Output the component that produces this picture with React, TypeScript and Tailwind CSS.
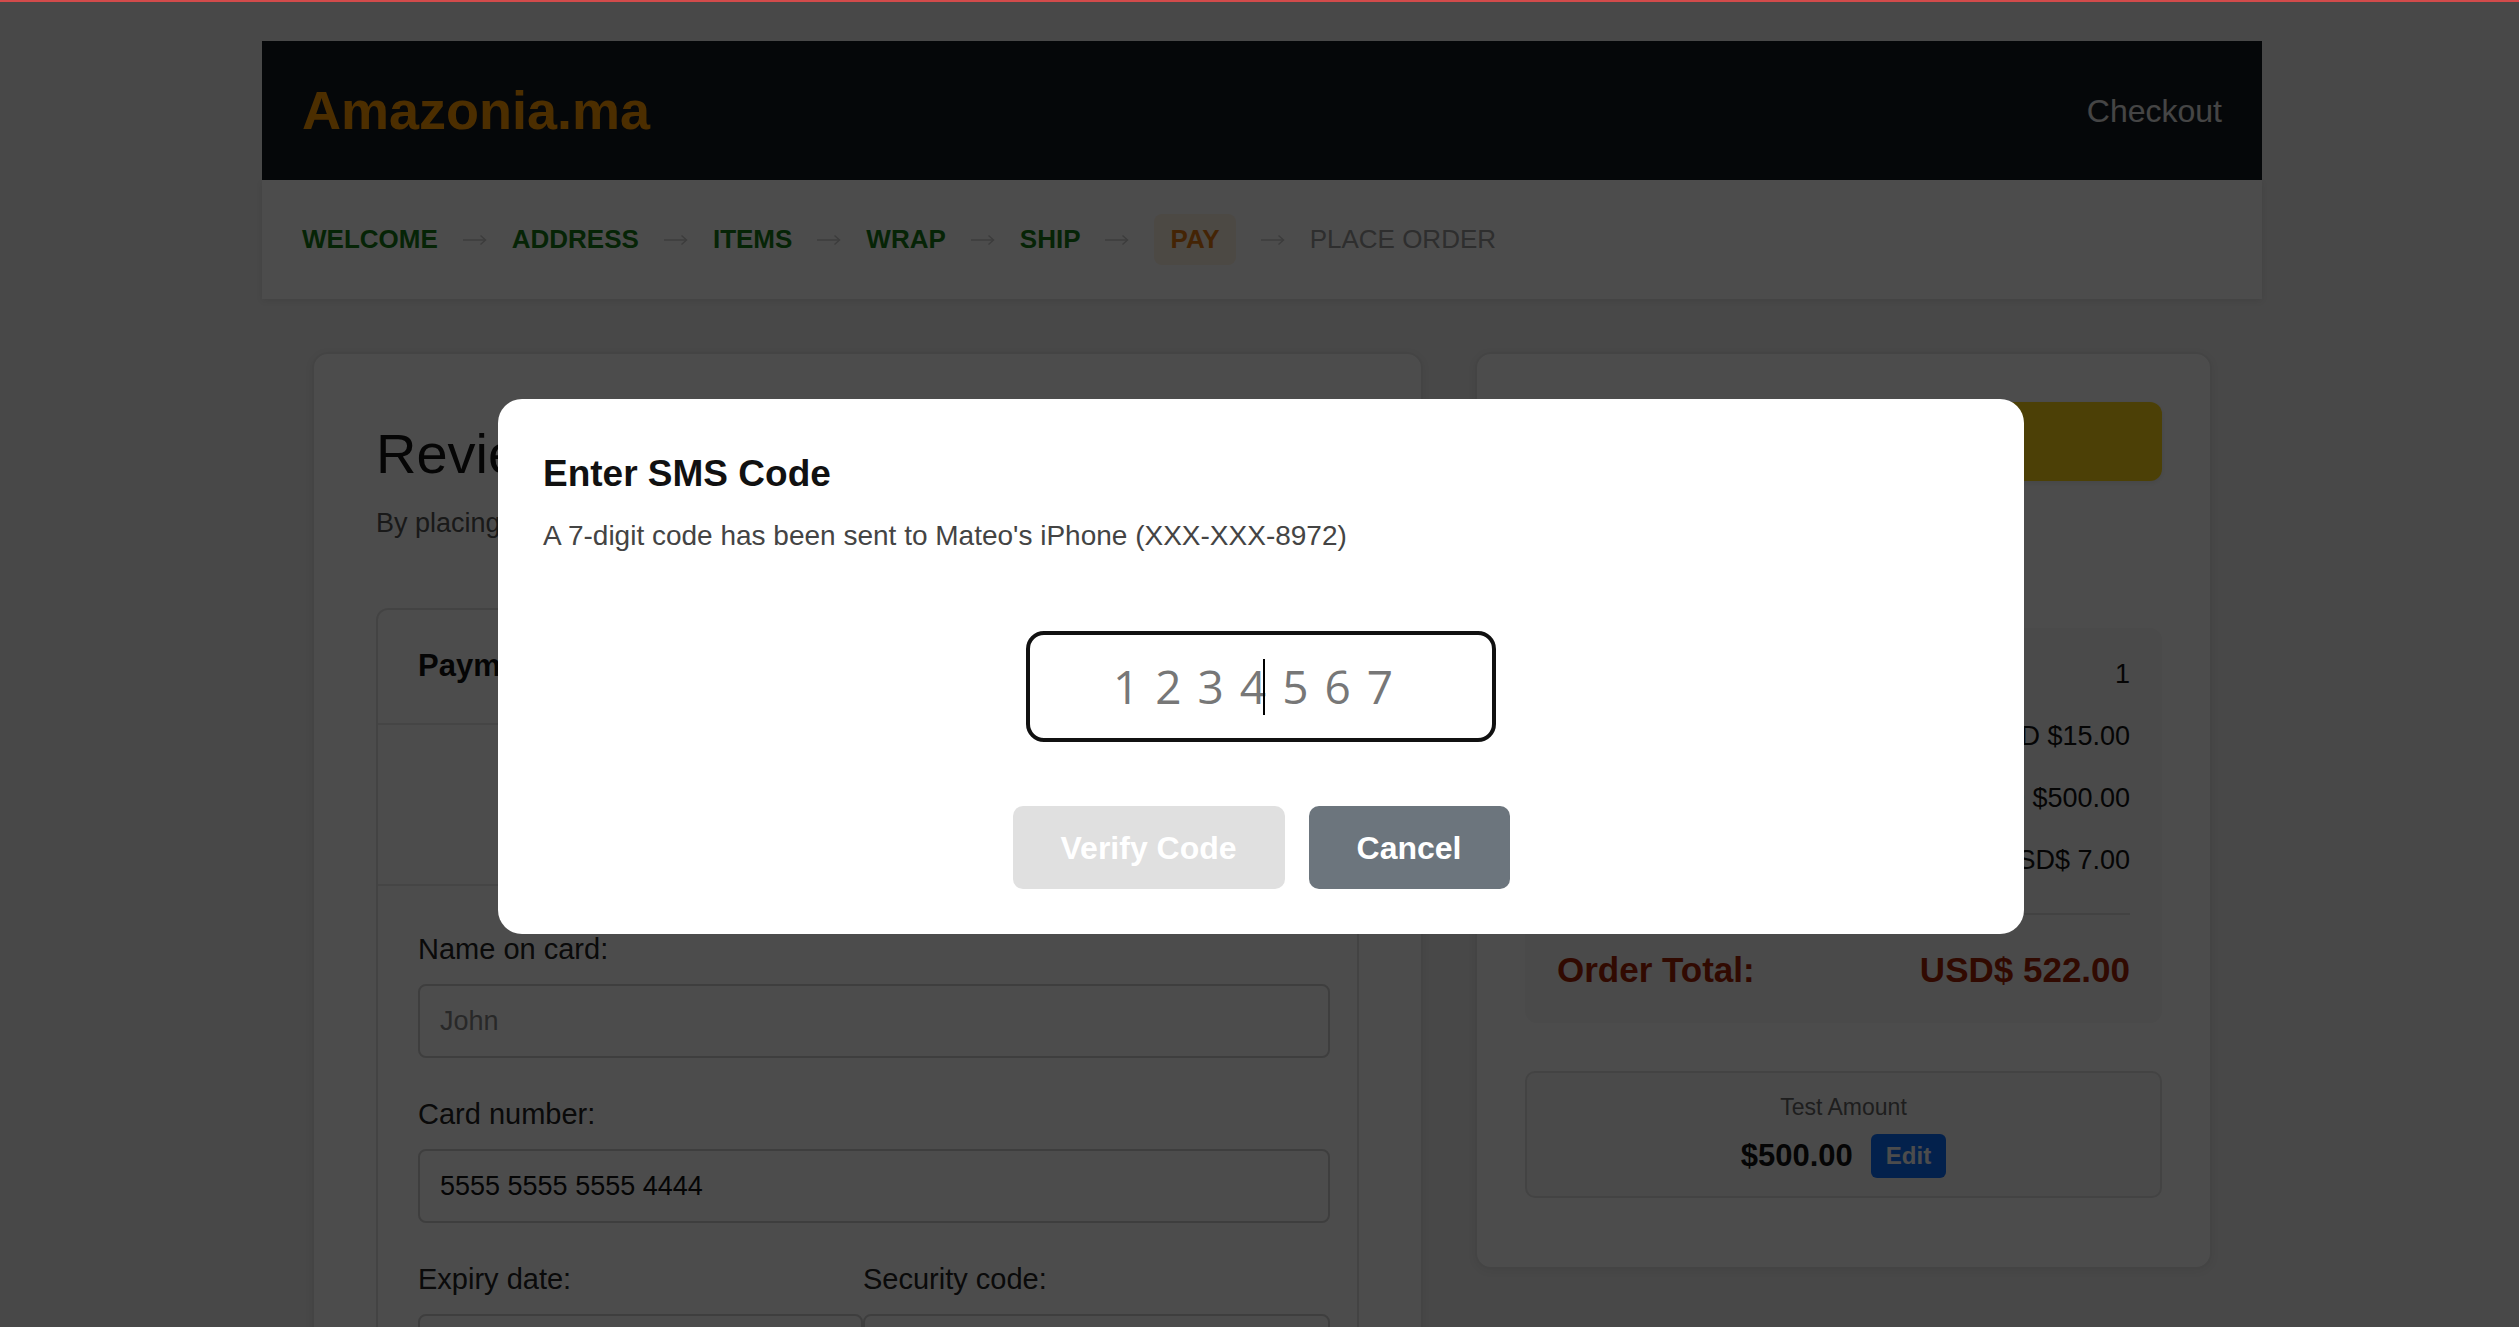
import React from "react";

const steps = [
  { label: "WELCOME", state: "done" },
  { label: "ADDRESS", state: "done" },
  { label: "ITEMS", state: "done" },
  { label: "WRAP", state: "done" },
  { label: "SHIP", state: "done" },
  { label: "PAY", state: "active" },
  { label: "PLACE ORDER", state: "todo" },
] as const;

const summaryRows = [
  { label: "Items:", value: "1" },
  { label: "Shipping & handling:", value: "USD $15.00" },
  { label: "Total before tax:", value: "USD $500.00" },
  { label: "Estimated tax:", value: "USD$ 7.00" },
];

function Arrow() {
  return (
    <span className="w-[74px] flex justify-center">
      <svg width="24" height="12" viewBox="0 0 24 12" fill="none" stroke="#c8c8c8" strokeWidth="1.5">
        <path d="M0 6H22.5" />
        <path d="M17.5 1.5L22.5 6L17.5 10.5" />
      </svg>
    </span>
  );
}

function StepNav() {
  return (
    <nav className="h-[119px] bg-white flex items-center px-[40px] shadow-[0_2px_6px_rgba(0,0,0,0.08)]">
      {steps.map((s, i) => (
        <React.Fragment key={s.label}>
          {i > 0 && <Arrow />}
          {s.state === "done" && (
            <span className="text-[26px] font-bold text-[#147a14]">{s.label}</span>
          )}
          {s.state === "active" && (
            <span className="px-[16px] py-[6px] rounded-[8px] bg-[#fff3e3] text-[26px] font-bold text-[#e47911]">
              {s.label}
            </span>
          )}
          {s.state === "todo" && (
            <span className="text-[26px] text-[#999999]">{s.label}</span>
          )}
        </React.Fragment>
      ))}
    </nav>
  );
}

function Field({ label, value, placeholder }: { label: string; value?: string; placeholder?: string }) {
  return (
    <div>
      <label className="block text-[29px] leading-[33px] text-[#222]">{label}</label>
      <div className="mt-[18px] h-[74px] rounded-[8px] border-2 border-[#cfcfcf] bg-white flex items-center px-[20px] text-[27px]">
        {value ? (
          <span className="text-[#111]">{value}</span>
        ) : (
          <span className="text-[#888]">{placeholder}</span>
        )}
      </div>
    </div>
  );
}

function PaymentForm() {
  return (
    <div className="rounded-[12px] border-2 border-[#e2e2e2]">
      <div className="h-[115px] flex items-center px-[40px] border-b-2 border-[#e6e6e6]">
        <h2 className="text-[31px] font-bold text-[#111]">Payment method</h2>
      </div>
      <div className="h-[161px] border-b-2 border-[#e6e6e6]" />
      <div className="pl-[40px] pr-[27px] pt-[47px] pb-[40px] flex flex-col gap-[40px]">
        <Field label="Name on card:" placeholder="John" />
        <Field label="Card number:" value="5555 5555 5555 4444" />
        <div className="grid grid-cols-[445px_467px]">
          <Field label="Expiry date:" placeholder="MM/YY" />
          <Field label="Security code:" placeholder="CVC" />
        </div>
      </div>
    </div>
  );
}

function OrderSummary() {
  return (
    <aside className="rounded-[16px] bg-white border-2 border-[#e4e4e4] shadow-[0_2px_8px_rgba(0,0,0,0.06)] px-[48px] pt-[48px] pb-[69px] self-start">
      <div className="h-[79px] rounded-[12px] bg-[#ffd814] flex items-center justify-center text-[30px] text-[#111] shadow-[0_2px_5px_rgba(213,217,217,0.5)]">
        Place your order
      </div>
      <h3 className="mt-[46px] text-[33px] font-bold text-[#111] leading-[40px] h-[101px]">Order Summary</h3>
      <div className="rounded-[12px] bg-[#f7f7f7] px-[32px] pt-[15px] pb-[33px]">
        {summaryRows.map((r) => (
          <div key={r.label} className="h-[62px] flex items-center justify-between text-[27px] text-[#111]">
            <span>{r.label}</span>
            <span>{r.value}</span>
          </div>
        ))}
        <div className="mt-[22px] border-t-2 border-[#dddddd] pt-[35px] flex items-center justify-between text-[35px] font-bold text-[#a52204] leading-[40px]">
          <span>Order Total:</span>
          <span>USD$ 522.00</span>
        </div>
      </div>
      <div className="mt-[48px] h-[127px] rounded-[10px] border-2 border-[#e0e0e0] bg-[#f8f8f8] flex flex-col items-center justify-center">
        <span className="text-[23px] text-[#666]">Test Amount</span>
        <div className="mt-[9px] flex items-center gap-[18px]">
          <span className="text-[31px] font-bold text-[#111]">$500.00</span>
          <span className="h-[44px] px-[15px] rounded-[6px] bg-[#0d6efd] text-white text-[24px] font-bold flex items-center">
            Edit
          </span>
        </div>
      </div>
    </aside>
  );
}

function SmsModal() {
  return (
    <div className="fixed inset-0 z-40 bg-black/70 flex items-center justify-center pt-[6px] pl-[3px]">
      <div className="w-[1526px] rounded-[24px] bg-white px-[45px] pt-[53px] pb-[45px]">
        <h2 className="text-[37px] font-bold text-[#111] leading-[43px]">Enter SMS Code</h2>
        <p className="mt-[25px] text-[28px] leading-[32px] text-[#444]">
          A 7-digit code has been sent to Mateo's iPhone (XXX-XXX-8972)
        </p>
        <div className="mt-[79px] flex justify-center">
          <div className="w-[470px] h-[111px] rounded-[18px] border-[4px] border-[#111] flex items-center justify-center font-['Open_Sans',sans-serif] text-[46px] text-[#777] tracking-[16px]">
            <span>1234</span>
            <span className="relative inline-block w-0 h-[56px]">
              <span className="absolute -left-[19px] top-0 w-[2px] h-[56px] bg-black" />
            </span>
            <span>567</span>
          </div>
        </div>
        <div className="mt-[64px] flex justify-center gap-[24px]">
          <button className="h-[83px] px-[48px] rounded-[10px] bg-[#e0e0e0] text-white text-[32px] font-bold">
            Verify Code
          </button>
          <button className="h-[83px] px-[48px] rounded-[10px] bg-[#6c757d] text-white text-[32px] font-bold">
            Cancel
          </button>
        </div>
      </div>
    </div>
  );
}

export default function App() {
  return (
    <div className="min-h-screen bg-[#f0f0f0] font-['Liberation_Sans',Arial,sans-serif]">
      <div className="fixed top-0 left-0 right-0 h-[2px] bg-[#d24b4b] z-50" />
      <div className="w-[2000px] ml-[262px] pt-[41px]">
        <header className="h-[139px] bg-[#131921] flex items-center justify-between px-[40px]">
          <span className="text-[54px] font-bold text-[#ff9900]">Amazonia.ma</span>
          <span className="text-[32px] text-[#e6e6e6]">Checkout</span>
        </header>
        <StepNav />
        <main className="grid grid-cols-[1111px_737px] gap-[52px] pl-[50px] pt-[53px] pb-[60px]">
          <section className="rounded-[16px] bg-white border-2 border-[#e4e4e4] shadow-[0_2px_8px_rgba(0,0,0,0.06)] px-[62px] pt-[68px] pb-[64px]">
            <h1 className="text-[56px] leading-[64px] text-[#111]">Review your order</h1>
            <p className="mt-[22px] text-[27px] leading-[31px] text-[#555]">
              By placing your order, you agree to our conditions.
            </p>
            <div className="mt-[69px]">
              <PaymentForm />
            </div>
          </section>
          <OrderSummary />
        </main>
      </div>
      <SmsModal />
    </div>
  );
}
